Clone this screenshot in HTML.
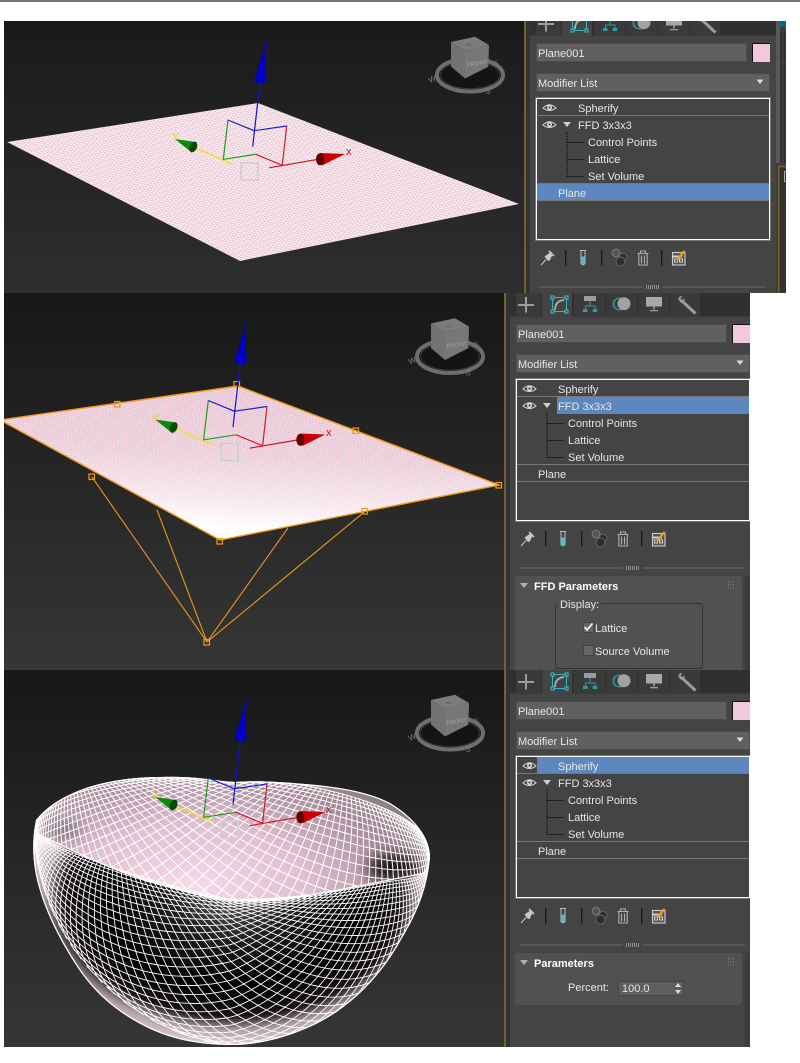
<!DOCTYPE html>
<html><head><meta charset="utf-8"><title>FFD and Spherify</title>
<style>
html,body{margin:0;padding:0;background:#fff}
body{position:relative;width:800px;height:1063px;overflow:hidden;font-family:"Liberation Sans",sans-serif;font-size:11px;color:#e6e6e6}
#vp{position:absolute;left:0;top:0}
.wrap{position:absolute;overflow:hidden;background:#444}
.p{position:absolute;left:0;width:280px;height:420px}
.p div{position:absolute;box-sizing:border-box}
.t{white-space:nowrap;line-height:16px;height:16px;margin-top:1px}
.strip{left:0;top:0;width:4px;height:420px;background:#333}
.top{left:4px;top:0;width:276px;height:23px;background:#303030}
.tab{top:0;height:23px;background:#3a3a3a}
.act{background:#444;height:25px}
.hl{left:4px;top:23px;width:276px;height:1px;background:#3a3a3a}
.fld{background:#606060;border:1px solid #4c4c4c;height:19px}
.sw{left:226px;top:31px;width:18px;height:19px;background:#f2c9dc;border-left:1px solid #111;border-top:1px solid #111}
.stack{left:10px;top:86px;width:234px;height:142px;border:1px solid #fff;outline:1px solid #777;background:#444}
.ln{height:1px;left:11px;width:232px;background:#777}
.sel{background:#5c88bf}
.roll{left:9px;top:283px;width:227px;background:#515151;border-radius:3px}
.rs{left:239px;top:283px;width:5px;height:140px;background:#3c3c3c}
.b{font-weight:bold;color:#fff}
svg.i{position:absolute;left:0;top:0;overflow:visible}
.cb{width:11px;height:11px;background:#656565;border:1px solid #444}
.gb{left:49px;top:310px;width:148px;height:66px;border:1px solid #333;border-radius:3px}
</style></head><body>

<svg id="vp" width="800" height="1063" viewBox="0 0 800 1063" xmlns="http://www.w3.org/2000/svg">
<defs>
<linearGradient id="g1" x1="0" y1="0" x2="0" y2="1"><stop offset="0" stop-color="#1a1a1a"/><stop offset="1" stop-color="#2e2e2e"/></linearGradient>
<linearGradient id="g2" x1="0" y1="0" x2="0" y2="1"><stop offset="0" stop-color="#171717"/><stop offset="1" stop-color="#363636"/></linearGradient>
<pattern id="m1" width="1" height="1" patternUnits="userSpaceOnUse" patternTransform="matrix(3,-.47,3.13,1.2,7,142)">
<rect width="1" height="1" fill="#fbf3f6"/><path d="M0 0H1M0 0V1" stroke="#dca0b6" stroke-width=".3"/></pattern>
<pattern id="m2" width="1" height="1" patternUnits="userSpaceOnUse" patternTransform="matrix(3.5,-.55,3.65,1.4,4,421)">
<path d="M0 0H1M0 0V1" stroke="#fff" stroke-width=".3"/></pattern>
<linearGradient id="pl2" gradientUnits="userSpaceOnUse" x1="240" y1="385" x2="232" y2="540">
<stop offset="0" stop-color="#e6bccd"/><stop offset=".45" stop-color="#e8c4d3"/><stop offset=".75" stop-color="#f6e4ec"/><stop offset=".93" stop-color="#fff"/><stop offset="1" stop-color="#fff"/></linearGradient>
<radialGradient id="inn" gradientUnits="userSpaceOnUse" cx="190" cy="890" r="260" gradientTransform="matrix(1 0 0 .55 0 400)">
<stop offset="0" stop-color="#f6dbe8"/><stop offset=".45" stop-color="#e0bfd0"/><stop offset=".8" stop-color="#a68c9a"/><stop offset="1" stop-color="#8a7a82"/></radialGradient>
<radialGradient id="out" gradientUnits="userSpaceOnUse" cx="232" cy="900" r="210" gradientTransform="matrix(1 0 0 .69 0 279)">
<stop offset="0" stop-color="#555"/><stop offset=".3" stop-color="#1c1c1c"/><stop offset=".6" stop-color="#000"/><stop offset=".8" stop-color="#181214"/><stop offset=".9" stop-color="#b0a0a6"/><stop offset="1" stop-color="#e2ced6"/></radialGradient>
<filter id="bl2" x="-50%" y="-80%" width="200%" height="260%"><feGaussianBlur stdDeviation="7"/></filter>
<clipPath id="cOuter"><path d="M36,820C60,790 110,777 160,777C200,776 215,781 235,782C250,781 262,781 277,782C330,785 365,790 390,803C415,818 430,838 430,857C428,880 422,905 402,938C382,975 352,1006 316,1024C285,1039 255,1045 233,1045C205,1045 178,1041 155,1031C125,1018 98,998 78,968C56,935 40,900 35,870C32,850 33,835 36,820Z"/></clipPath>
<clipPath id="cInner"><path d="M36,820C60,790 110,777 160,777C200,776 215,781 235,782C250,781 262,781 277,782C330,785 365,790 390,803C415,818 430,838 430,857L425,873C380,882 340,890 300,897C270,902 250,901 233,900C215,900 200,895 187,892C150,882 120,872 100,863C75,852 55,842 35,833Z"/></clipPath>
<clipPath id="cv2"><rect x="4" y="293" width="500" height="377"/></clipPath>

<g id="giz">
<path d="M233.3 164.3L193.3 147.3" stroke="#f4e02a" stroke-width="1.5"/>
<path d="M175 139L195.5 142L191 152Z" fill="#0a8c0a"/>
<ellipse cx="193.3" cy="147" rx="3.6" ry="5.6" fill="#054a05" transform="rotate(24 193.3 147)"/>
<path d="M228 120L223.3 159.3L255.7 154.3" fill="none" stroke="#1ca01c" stroke-width="1.2"/>
<path d="M286.7 126L282.3 165.3L255.7 154.3" fill="none" stroke="#cc1a28" stroke-width="1.2"/>
<path d="M269.3 167.7L320 159" stroke="#cc1a28" stroke-width="1.2"/>
<path d="M345 154L320 153L322 165.5Z" fill="#c80000"/>
<ellipse cx="320" cy="159.3" rx="4" ry="6" fill="#600000"/>
<path d="M228 120L254 130.7L286.7 126" fill="none" stroke="#1a20d8" stroke-width="1.2"/>
<path d="M260 82L252.7 146.7" stroke="#1010d0" stroke-width="1.2"/>
<path d="M264.7 46.7L254 81.5Q260 83.5 266.3 82.3Z" fill="#0000c8"/>
<rect x="241" y="163" width="17" height="17" fill="none" stroke="#cfcfcf" stroke-width="1.6"/>
</g>

<g id="cube">
<ellipse cx="470" cy="75" rx="33" ry="16.5" fill="#141414" stroke="#6c6f72" stroke-width="4"/>
<ellipse cx="470" cy="75" rx="29.5" ry="13.8" fill="none" stroke="#3a3a3a" stroke-width="1"/>
<path d="M451 42L475 36.7L489 45L465 51Z" fill="#7c7c7c"/>
<path d="M451 42L465 51L465 78.5L451 66.5Z" fill="#727272"/>
<path d="M465 51L489 45L488.3 66.7L465 78.5Z" fill="#777"/>
</g>
</defs>

<rect x="0" y="0" width="800" height="2" fill="#787878"/>

<!-- viewport 1 -->
<rect x="4" y="21" width="520" height="272" fill="url(#g1)"/>
<rect x="524" y="21" width="2" height="272" fill="#75622a"/>
<polygon points="7,142 258,103 519,204 240,261" fill="url(#m1)"/>
<use href="#giz"/>
<text x="263" y="47" font-size="10" fill="#0808b8" font-family="Liberation Sans,sans-serif">z</text>
<text x="173" y="139" font-size="11" fill="#e8d820" font-family="Liberation Sans,sans-serif">y</text>
<text x="346" y="155" font-size="11" fill="#c01818" font-family="Liberation Sans,sans-serif">x</text>
<use href="#cube"/>
<g font-family="Liberation Sans,sans-serif" fill="#7c7c7c">
<text x="466" y="46" font-size="4" fill="#555" transform="rotate(-6 466 46)">top</text>
<text x="467" y="67" font-size="6" font-weight="bold" fill="#969696" transform="rotate(-9 467 67)">FRONT</text>
<text x="430" y="83" font-size="8" transform="rotate(-25 430 83)">W</text>
<text x="485" y="93" font-size="8" transform="rotate(15 485 93)">S</text>
<text x="496" y="65" font-size="6" transform="rotate(-30 496 65)">E</text>
</g>

<!-- viewport 2 -->
<rect x="4" y="293" width="500" height="377" fill="url(#g2)"/>
<rect x="504" y="293" width="2" height="377" fill="#75622a"/>
<g clip-path="url(#cv2)">
<polygon points="0,420 238,386 499,485 220,540" fill="url(#pl2)"/>
<polygon points="0,420 238,386 499,485 220,540" fill="url(#m2)" opacity=".85"/>
<polygon points="0,420 238,386 499,485 220,540" fill="none" stroke="#f09a1c" stroke-width="1.4"/>
<path d="M207 642L91.7 476.7M207 642L157 510M207 642L288 528M207 642L365 511.3" stroke="#e8961a" stroke-width="1.1" fill="none"/>
<g fill="none" stroke="#f09a1c" stroke-width="1.2">
<rect x="114.5" y="401.5" width="5.5" height="5.5"/><rect x="234" y="381.5" width="5.5" height="5.5"/><rect x="353" y="428" width="5.5" height="5.5"/><rect x="496" y="482.5" width="5.5" height="5.5"/><rect x="362" y="508.5" width="5.5" height="5.5"/><rect x="217" y="538.5" width="5.5" height="5.5"/><rect x="89" y="474" width="5.5" height="5.5"/><rect x="204" y="639.5" width="5.5" height="5.5"/>
</g>
</g>
<g transform="translate(-19.7 280.5)"><use href="#giz"/></g>
<text x="243" y="328" font-size="10" fill="#0808b8" font-family="Liberation Sans,sans-serif">z</text>
<text x="153" y="420" font-size="11" fill="#e8d820" font-family="Liberation Sans,sans-serif">y</text>
<text x="326" y="436" font-size="11" fill="#c01818" font-family="Liberation Sans,sans-serif">x</text>
<g transform="translate(-20 281.5)"><use href="#cube"/>
<g font-family="Liberation Sans,sans-serif" fill="#7c7c7c">
<text x="466" y="46" font-size="4" fill="#555" transform="rotate(-6 466 46)">top</text>
<text x="467" y="67" font-size="6" font-weight="bold" fill="#969696" transform="rotate(-9 467 67)">FRONT</text>
<text x="430" y="83" font-size="8" transform="rotate(-25 430 83)">W</text>
<text x="485" y="93" font-size="8" transform="rotate(15 485 93)">S</text>
<text x="496" y="65" font-size="6" transform="rotate(-30 496 65)">E</text>
</g></g>

<!-- viewport 3 -->
<rect x="4" y="670" width="500" height="377" fill="url(#g2)"/>
<rect x="504" y="670" width="2" height="377" fill="#75622a"/>
<g clip-path="url(#cOuter)">
<rect x="20" y="770" width="430" height="280" fill="url(#out)"/>
</g>
<g clip-path="url(#cInner)">
<rect x="20" y="770" width="430" height="140" fill="url(#inn)"/>
<ellipse cx="395" cy="868" rx="28" ry="14" fill="#1c1418" filter="url(#bl2)"/>
<ellipse cx="60" cy="830" rx="22" ry="8" fill="#7a6c74" filter="url(#bl2)"/>
<path id="mBack" fill="none" stroke="#fff" stroke-width="1"/>
</g>
<g clip-path="url(#cOuter)">
<path id="mFront" fill="none" stroke="#fff" stroke-width=".9"/>
<path d="M35,833C55,842 75,852 100,863C120,872 150,882 187,892C200,895 215,900 233,900C250,901 270,902 300,897C340,890 380,882 425,873" fill="none" stroke="#fff" stroke-width="1.3"/>
<path d="M36,820C60,790 110,777 160,777C200,776 215,781 235,782C250,781 262,781 277,782C330,785 365,790 390,803C415,818 430,838 430,857C428,880 422,905 402,938C382,975 352,1006 316,1024C285,1039 255,1045 233,1045C205,1045 178,1041 155,1031C125,1018 98,998 78,968C56,935 40,900 35,870C32,850 33,835 36,820Z" fill="none" stroke="#fff" stroke-width="2.4"/>
</g>
<g transform="translate(-19.7 658)"><use href="#giz"/></g>
<text x="243" y="705" font-size="10" fill="#0808b8" font-family="Liberation Sans,sans-serif">z</text>
<text x="153" y="797" font-size="11" fill="#e8d820" font-family="Liberation Sans,sans-serif">y</text>
<text x="326" y="813" font-size="11" fill="#c01818" font-family="Liberation Sans,sans-serif">x</text>
<g transform="translate(-20 658)"><use href="#cube"/>
<g font-family="Liberation Sans,sans-serif" fill="#7c7c7c">
<text x="466" y="46" font-size="4" fill="#555" transform="rotate(-6 466 46)">top</text>
<text x="467" y="67" font-size="6" font-weight="bold" fill="#969696" transform="rotate(-9 467 67)">FRONT</text>
<text x="430" y="83" font-size="8" transform="rotate(-25 430 83)">W</text>
<text x="485" y="93" font-size="8" transform="rotate(15 485 93)">S</text>
<text x="496" y="65" font-size="6" transform="rotate(-30 496 65)">E</text>
</g></g>

<!-- shared panel icons -->
<defs>
<g id="tabs">
<path d="M12 12H28M20 4V19.5" stroke="#9c9c9c" stroke-width="2" fill="none"/>
<path d="M46.5 4.5H60.5M46.5 18.5H60.5M46.5 4.5V18.5M60.5 4.5V18.5" stroke="#35b6bd" stroke-width="1" fill="none"/>
<g fill="#444" stroke="#35c4cc" stroke-width="1"><rect x="45" y="3" width="3" height="3"/><rect x="59" y="3" width="3" height="3"/><rect x="45" y="17" width="3" height="3"/><rect x="59" y="17" width="3" height="3"/></g>
<path d="M49 17Q49 8 58 7" stroke="#b0b0b0" stroke-width="1.8" fill="none"/>
<rect x="78" y="3" width="12" height="5" fill="#9c9c9c"/>
<path d="M84 8V13M79.5 16V13H89V16" stroke="#2f9aa0" stroke-width="1" fill="none"/>
<rect x="77" y="16" width="4.5" height="3" fill="#2f9aa0"/><rect x="86.7" y="16" width="4.5" height="3" fill="#2f9aa0"/>
<circle cx="112" cy="11" r="5.5" fill="none" stroke="#2c7a80" stroke-width="1"/>
<circle cx="114" cy="11" r="6" fill="none" stroke="#3f9aa0" stroke-width="1"/>
<circle cx="118" cy="10.7" r="6.5" fill="#a2a2a2"/>
<rect x="140" y="4" width="16" height="9.5" fill="#a8a8a8"/><rect x="147" y="13.5" width="2" height="3" fill="#888"/><rect x="144" y="17" width="8" height="1.3" fill="#999"/>
<path d="M175.5 7.5L189.5 20.5" stroke="#9c9c9c" stroke-width="3" fill="none"/>
<path d="M172.5 6.5C172 4 174 3 176.5 3.2L174.5 5.4L176.2 7.2L178.5 5.2C179 8 177 10 174.5 9.6Z" fill="#9c9c9c"/>
</g>
<g id="tools">
<path d="M15 253L20 247.5" stroke="#c8c8c8" stroke-width="1"/>
<path d="M18.5 244.5L25 240L27 241.8L23.5 249L21.5 248.5Z" fill="#c8c8c8"/><path d="M23 239L28 244" stroke="#c8c8c8" stroke-width="1.6"/>
<path d="M39.7 238V253.5M75.7 238V253.5M135.7 238V253.5" stroke="#111" stroke-width="1.1"/>
<path d="M54 238.5H60M55 238.5V251.5Q57 254 59 251.5V238.5" fill="none" stroke="#bdbdbd" stroke-width="1"/>
<rect x="55.6" y="244.5" width="2.8" height="7.5" fill="#3ec0c4"/>
<circle cx="90" cy="241" r="3.8" fill="#555" stroke="#777" stroke-width="1.1"/>
<circle cx="97" cy="245" r="3.8" fill="#2e2e2e" stroke="#666" stroke-width="1"/>
<circle cx="94.5" cy="249.5" r="4.5" fill="#2e2e2e" stroke="#666" stroke-width="1"/>
<path d="M111.5 241.5H122.5M114.5 241V239H119.5V241M112.8 241.8V253H121.2V241.8M115.5 243.5V251.5M118.5 243.5V251.5" fill="none" stroke="#b0b0b0" stroke-width="1.1"/>
<rect x="146.5" y="240.5" width="12.5" height="12.5" fill="#555" stroke="#cfcfcf" stroke-width="1.1"/>
<path d="M146.5 244.5H156" stroke="#cfcfcf" stroke-width="2"/>
<path d="M148.5 247H151.5V250H148.5ZM153.5 247H156.5V250H153.5Z" fill="none" stroke="#cfcfcf"/>
<path d="M151 248L158.5 239" stroke="#f09a1c" stroke-width="2.4"/>
</g>
<g id="eye"><path d="M0 4Q6.5 -2.5 13 4Q6.5 9 0 4Z" fill="none" stroke="#d8d8d8" stroke-width="1"/><circle cx="6.5" cy="3.5" r="2.6" fill="#d8d8d8"/><circle cx="6.5" cy="3.5" r="1" fill="#333"/></g>
<g id="tree">
<path d="M41 120V164.5M41.5 130.5H58M41.5 147.5H58M41.5 164.5H58" fill="none" stroke="#000" stroke-width="1" stroke-dasharray="1 1"/>
<path d="M37 110H45L41 115Z" fill="#cfcfcf"/>
<use href="#eye" x="17" y="92"/><use href="#eye" x="17" y="109"/>
<path d="M14 275H117M137 275H239" stroke="#6a6a6a" stroke-width="1"/>
<path d="M120 274H133M120 276H133" stroke="#d8d8d8" stroke-dasharray="1 1" stroke-width="1"/>
</g>
</defs>
</svg>

<!-- PANEL 1 -->
<div class="wrap" style="left:526px;top:21px;width:260px;height:272px">
<div class="p" style="top:-9px">
<div class="strip"></div><div class="top"></div><div class="hl"></div>
<div class="tab" style="left:10px;width:25px"></div><div class="tab act" style="left:36px;width:30px"></div><div class="tab" style="left:68px;width:31px"></div><div class="tab" style="left:100px;width:31px"></div><div class="tab" style="left:132px;width:31px"></div><div class="tab" style="left:164px;width:30px"></div>
<div class="fld" style="left:10px;top:31px;width:211px"></div><div class="sw"></div>
<div class="fld" style="left:10px;top:61px;width:234px"></div>
<div class="t" style="left:12px;top:33px">Plane001</div><div class="t" style="left:12px;top:63px">Modifier List</div>
<div class="stack"></div>
<div class="sel" style="left:11px;top:172px;width:232px;height:16px"></div>
<div class="ln" style="top:103px"></div><div class="ln" style="top:171px"></div><div class="ln" style="top:188px"></div>
<div class="t" style="left:52px;top:88px">Spherify</div><div class="t" style="left:52px;top:105px">FFD 3x3x3</div><div class="t" style="left:62px;top:122px">Control Points</div><div class="t" style="left:62px;top:139px">Lattice</div><div class="t" style="left:62px;top:156px">Set Volume</div><div class="t" style="left:32px;top:173px">Plane</div>
<div style="left:250px;top:0;width:10px;height:300px;background:#3d3d3d"></div>
<svg class="i" width="260" height="300"><use href="#tabs"/><use href="#tools"/><use href="#tree"/><path d="M230.5 67.5H237.5L234 72Z" fill="#ddd"/>
<rect x="250" y="0" width="4" height="151" fill="#585858"/>
<rect x="253" y="0" width="7" height="15" fill="#0d6a74"/>
<path d="M255 21V50M255 53V151M258.5 21V50M258.5 53V151" stroke="#2c2c2c" stroke-width="1.2"/>
<path d="M252 154.5H260" stroke="#7a6428" stroke-width="1.5"/><path d="M252.7 154V300" stroke="#7a6428" stroke-width="1.5"/>
<rect x="253.5" y="155.5" width="6.5" height="145" fill="#333"/><rect x="258.5" y="159.5" width="3" height="10" fill="none" stroke="#aaa"/>
</svg>
</div></div>

<!-- PANEL 2 -->
<div class="wrap" style="left:506px;top:293px;width:244px;height:377px">
<div class="p" style="top:0">
<div class="strip"></div><div class="top"></div><div class="hl"></div>
<div class="tab" style="left:10px;width:25px"></div><div class="tab act" style="left:36px;width:30px"></div><div class="tab" style="left:68px;width:31px"></div><div class="tab" style="left:100px;width:31px"></div><div class="tab" style="left:132px;width:31px"></div><div class="tab" style="left:164px;width:30px"></div>
<div class="fld" style="left:10px;top:31px;width:211px"></div><div class="sw"></div>
<div class="fld" style="left:10px;top:61px;width:234px"></div>
<div class="t" style="left:12px;top:33px">Plane001</div><div class="t" style="left:12px;top:63px">Modifier List</div>
<div class="stack"></div>
<div class="sel" style="left:51px;top:104px;width:192px;height:17px"></div>
<div class="ln" style="top:103px"></div><div class="ln" style="top:171px"></div><div class="ln" style="top:188px"></div>
<div class="t" style="left:52px;top:88px">Spherify</div><div class="t" style="left:52px;top:105px">FFD 3x3x3</div><div class="t" style="left:62px;top:122px">Control Points</div><div class="t" style="left:62px;top:139px">Lattice</div><div class="t" style="left:62px;top:156px">Set Volume</div><div class="t" style="left:32px;top:173px">Plane</div>
<div class="roll" style="height:110px"></div><div class="rs"></div>
<div class="t b" style="left:28px;top:285px">FFD Parameters</div>
<div class="gb"></div>
<div class="t" style="left:52px;top:303px;background:#515151;padding:0 2px">Display:</div>
<div class="cb" style="left:77px;top:329px"></div><div class="t" style="left:89px;top:327px">Lattice</div>
<div class="cb" style="left:77px;top:352px"></div><div class="t" style="left:89px;top:350px">Source Volume</div>
<svg class="i" width="244" height="377"><use href="#tabs"/><use href="#tools"/><use href="#tree"/><path d="M230.5 67.5H237.5L234 72Z" fill="#ddd"/>
<path d="M78.5 334L81 337L86.5 330.5" fill="none" stroke="#eee" stroke-width="1.8"/>
<path d="M14 290H22L18 295Z" fill="#b0b0b0"/>
<path d="M222 289H229M222 292H229M222 295H229" stroke="#8a8a8a" stroke-dasharray="1 1.5"/>
</svg>
</div></div>

<!-- PANEL 3 -->
<div class="wrap" style="left:506px;top:670px;width:244px;height:377px">
<div class="p" style="top:0">
<div class="strip"></div><div class="top"></div><div class="hl"></div>
<div class="tab" style="left:10px;width:25px"></div><div class="tab act" style="left:36px;width:30px"></div><div class="tab" style="left:68px;width:31px"></div><div class="tab" style="left:100px;width:31px"></div><div class="tab" style="left:132px;width:31px"></div><div class="tab" style="left:164px;width:30px"></div>
<div class="fld" style="left:10px;top:31px;width:211px"></div><div class="sw"></div>
<div class="fld" style="left:10px;top:61px;width:234px"></div>
<div class="t" style="left:12px;top:33px">Plane001</div><div class="t" style="left:12px;top:63px">Modifier List</div>
<div class="stack"></div>
<div class="sel" style="left:31px;top:87px;width:212px;height:16px"></div>
<div class="ln" style="top:103px"></div><div class="ln" style="top:171px"></div><div class="ln" style="top:188px"></div>
<div class="t" style="left:52px;top:88px">Spherify</div><div class="t" style="left:52px;top:105px">FFD 3x3x3</div><div class="t" style="left:62px;top:122px">Control Points</div><div class="t" style="left:62px;top:139px">Lattice</div><div class="t" style="left:62px;top:156px">Set Volume</div><div class="t" style="left:32px;top:173px">Plane</div>
<div class="roll" style="height:52px"></div><div class="rs"></div>
<div class="t b" style="left:28px;top:285px">Parameters</div>
<div class="t" style="left:62px;top:309px">Percent:</div>
<div style="left:112px;top:311px;width:66px;height:15px;background:#5e5e5e;border:1px solid #444"></div>
<div class="t" style="left:116px;top:310px">100.0</div>
<svg class="i" width="244" height="377"><use href="#tabs"/><use href="#tools"/><use href="#tree"/><path d="M230.5 67.5H237.5L234 72Z" fill="#ddd"/>
<path d="M14 290H22L18 295Z" fill="#b0b0b0"/>
<path d="M222 289H229M222 292H229M222 295H229" stroke="#8a8a8a" stroke-dasharray="1 1.5"/>
<path d="M169 317L172 313L175 317ZM169 320L172 324L175 320Z" fill="#ddd"/>
</svg>
</div></div>

<script>
(function(){
var N=56,S=90,rot=0.62,c=Math.cos(rot),s=Math.sin(rot),PI=Math.PI;
function P(u,v){
 var x=u*Math.sqrt(1-v*v/2),y=v*Math.sqrt(1-u*u/2);
 var X0=x*c-y*s,Y0=x*s+y*c,r=Math.min(1,Math.sqrt(X0*X0+Y0*Y0));
 var phi=(PI/2)*(0.25*r+0.75*Math.sin(r*PI/2)),h=r>1e-6?Math.sin(phi)/r:PI/2*1.43;
 var X=X0*h,Y=Y0*h,Z=Math.cos(phi),k=0.31;
 if(Y>0){k=X<0?0.31*(1+0.41*X):0.31*(1-0.2*X+0.97*Math.pow(X,12));}
 return [232+198*X,838+198*(k*Y+Z+0.063*X),Y-0.31*Z>0];
}
var F=[],B=[];
function line(fn){
 var pr=null;
 for(var k=0;k<=S;k++){
  var q=fn(-1+2*k/S);
  if(pr){(q[2]?F:B).push("M"+pr[0].toFixed(1)+" "+pr[1].toFixed(1)+"L"+q[0].toFixed(1)+" "+q[1].toFixed(1));}
  pr=q;
 }
}
for(var i=0;i<=N;i++){
 var t=-1+2*i/N;
 (function(t){line(function(a){return P(t,a)});line(function(a){return P(a,t)});})(t);
}
document.getElementById("mFront").setAttribute("d",F.join(""));
document.getElementById("mBack").setAttribute("d",B.join(""));
})();
</script>
</body></html>
